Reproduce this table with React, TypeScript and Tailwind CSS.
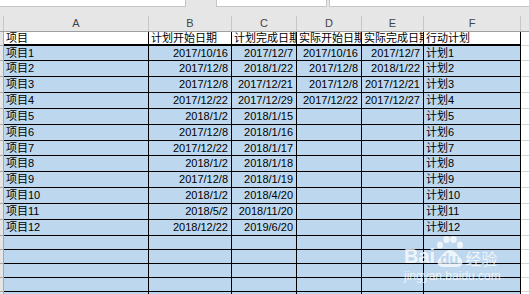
import React from 'react';

const rows = [
  ['项目1', '2017/10/16', '2017/12/7', '2017/10/16', '2017/12/7', '计划1'],
  ['项目2', '2017/12/8', '2018/1/22', '2017/12/8', '2018/1/22', '计划2'],
  ['项目3', '2017/12/8', '2017/12/21', '2017/12/8', '2017/12/21', '计划3'],
  ['项目4', '2017/12/22', '2017/12/29', '2017/12/22', '2017/12/27', '计划4'],
  ['项目5', '2018/1/2', '2018/1/15', '', '', '计划5'],
  ['项目6', '2017/12/8', '2018/1/16', '', '', '计划6'],
  ['项目7', '2017/12/22', '2018/1/17', '', '', '计划7'],
  ['项目8', '2018/1/2', '2018/1/18', '', '', '计划8'],
  ['项目9', '2017/12/8', '2018/1/19', '', '', '计划9'],
  ['项目10', '2018/1/2', '2018/4/20', '', '', '计划10'],
  ['项目11', '2018/5/2', '2018/11/20', '', '', '计划11'],
  ['项目12', '2018/12/22', '2019/6/20', '', '', '计划12'],
];

// rows in the sheet are not all the same pixel height at this zoom
const rowHeights = [
  'h-[15px]', 'h-[16px]', 'h-[16px]', 'h-[16px]', 'h-[16px]', 'h-[16px]',
  'h-[15px]', 'h-[16px]', 'h-[16px]', 'h-[16px]', 'h-[16px]', 'h-[16px]',
];

const headers = ['项目', '计划开始日期', '计划完成日期', '实际开始日期', '实际完成日期', '行动计划'];
const grid = 'grid grid-cols-[4px_145px_83px_65px_65px_62px_97px_1fr]';

function RowHead() {
  return <div className="bg-[#e6e6e6] border-r border-b border-[#a8a8a8]" />;
}

function DataRow({ cells, h }: { cells: string[]; h: string }) {
  return (
    <div className={`${grid} ${h}`}>
      <RowHead />
      {cells.map((c, i) => (
        <div
          key={i}
          className={`flex items-center overflow-hidden whitespace-nowrap bg-[#bdd7ee] border-r border-b border-black ${
            i === 0 || i === 5 ? 'justify-start pl-[2px]' : 'justify-end pr-[3px]'
          }`}
        >
          {c}
        </div>
      ))}
      <div className="bg-white border-b border-[#d4d4d4]" />
    </div>
  );
}

function Watermark() {
  return (
    <div className="absolute left-[404px] top-[236px] text-white opacity-75">
      <div className="flex items-end">
        <span className="font-['Liberation_Sans',sans-serif] font-bold text-[20px] leading-none mb-[1px]">Bai</span>
        <div className="relative w-[28px] h-[31px] ml-[1px]">
          <svg width="28" height="31" viewBox="0 0 28 31" className="absolute inset-0">
            <ellipse cx="4" cy="9" rx="3" ry="3.5" fill="white" />
            <ellipse cx="10.5" cy="3.5" rx="3.2" ry="3.5" fill="white" />
            <ellipse cx="17.5" cy="3.5" rx="3.2" ry="3.5" fill="white" />
            <ellipse cx="24" cy="9" rx="3" ry="3.5" fill="white" />
            <path d="M8 17 Q14 11 20 17 L26 24 Q28 31 20 31 L8 31 Q0 31 2 24 Z" fill="white" />
          </svg>
          <span className="absolute left-[4px] bottom-[1px] font-['Liberation_Sans',sans-serif] font-bold text-[15px] leading-none text-[#bdd7ee]">
            du
          </span>
        </div>
        <span className="ml-[1px] mb-[1px] font-['Noto_Sans_CJK_SC',sans-serif] text-[16px] leading-none">经验</span>
      </div>
      <div className="mt-[3px] font-['Liberation_Sans',sans-serif] text-[12px] leading-none">jingyan.baidu.com</div>
    </div>
  );
}

export default function App() {
  return (
    <div className="relative w-[529px] h-[294px] overflow-hidden bg-[#e6e6e6] text-[11px] leading-none text-black font-['Liberation_Sans','Noto_Sans_CJK_SC',sans-serif]">
      {/* name box / formula bar strip */}
      <div className="flex h-[7px]">
        <div className="w-[186px] bg-white border-r border-b border-[#c6c6c6]" />
        <div className="w-[30px]" />
        <div className="w-[111px] bg-white border-x border-b border-[#c6c6c6]" />
        <div className="w-[2px]" />
        <div className="flex-1 bg-white border-l border-b border-[#c6c6c6]" />
      </div>
      <div className="h-[9px]" />

      {/* column letters */}
      <div className={`${grid} h-[16px] border-b border-[#9f9f9f] text-[#444]`}>
        <div className="border-r border-[#c6c6c6]" />
        {['A', 'B', 'C', 'D', 'E', 'F'].map((l) => (
          <div key={l} className="flex items-center justify-center border-r border-[#c6c6c6]">
            {l}
          </div>
        ))}
        <div />
      </div>

      {/* header row */}
      <div className={`${grid} h-[14px]`}>
        <RowHead />
        {headers.map((t) => (
          <div
            key={t}
            className="flex items-center pl-[2px] overflow-hidden whitespace-nowrap bg-white border-r border-b-2 border-black"
          >
            {t}
          </div>
        ))}
        <div className="bg-white border-b border-[#d4d4d4]" />
      </div>

      {rows.map((r, i) => (
        <DataRow key={i} cells={r} h={rowHeights[i]} />
      ))}
      {[0, 1, 2, 3, 4].map((i) => (
        <DataRow key={'e' + i} cells={['', '', '', '', '', '']} h="h-[14px]" />
      ))}

      <Watermark />
    </div>
  );
}
